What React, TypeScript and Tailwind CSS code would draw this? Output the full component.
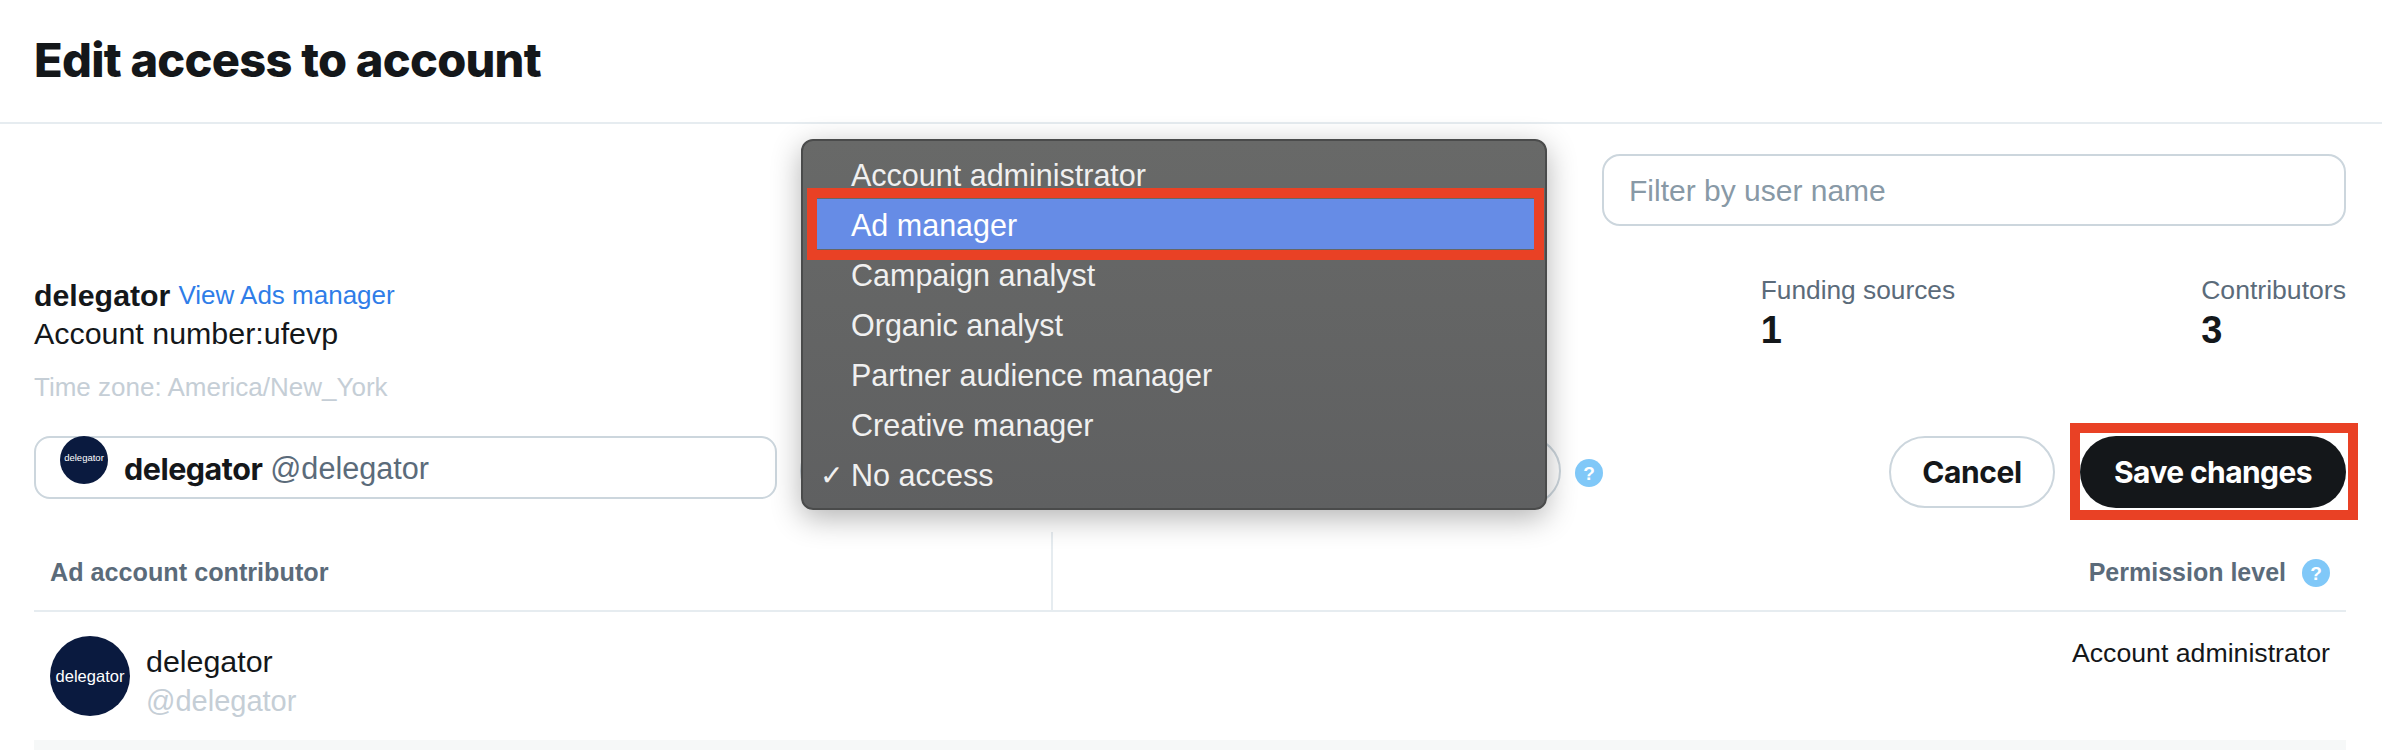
const ROLES = [
  "Account administrator",
  "Ad manager",
  "Campaign analyst",
  "Organic analyst",
  "Partner audience manager",
  "Creative manager",
  "No access",
];

function HelpDot() {
  return (
    <span className="flex h-[28px] w-[28px] shrink-0 items-center justify-center rounded-full bg-[#80c8f8] text-[19px] font-bold leading-none text-white">
      ?
    </span>
  );
}

function Avatar({ size, text }: { size: string; text: string }) {
  return (
    <span className={`flex shrink-0 items-center justify-center overflow-hidden rounded-full bg-[#0a1a3f] text-white ${size} ${text}`}>
      delegator
    </span>
  );
}

function RoleMenu() {
  return (
    <div className="absolute left-[801px] top-[139px] z-10 h-[371px] w-[746px] rounded-[12px] border-2 border-[#4a4b4b] bg-gradient-to-b from-[#686968] to-[#5f6061] pt-[8px] shadow-[0_8px_30px_rgba(0,0,0,0.3)]">
      {ROLES.map((role) => (
        <div
          key={role}
          className={`relative ml-[14px] mr-[11px] flex h-[50px] items-center pt-[3px] text-[30.5px] ${
            role === "Ad manager" ? "bg-[#668ce6] text-white" : "text-[#f0f0f0]"
          }`}
        >
          <span className="w-[34px] pl-[3px] text-[28px]">{role === "No access" ? "✓" : ""}</span>
          {role}
          {role === "Ad manager" && (
            <span className="absolute -inset-x-[10px] -inset-y-[11px] border-[10px] border-[#e94125]" />
          )}
        </div>
      ))}
    </div>
  );
}

export default function App() {
  return (
    <div className="relative h-[750px] w-[2382px] overflow-hidden bg-white font-['Liberation_Sans',sans-serif] text-[#14171a]">
      <header className="flex h-[124px] items-center border-b-2 border-[#e6ecf0] pb-[1px] pl-[34px]">
        <h1 className="font-['Inter',sans-serif] text-[47px] font-extrabold tracking-[-0.75px]">Edit access to account</h1>
      </header>

      <main className="pl-[34px] pr-[36px]">
        <div className="flex justify-end pt-[30px]">
          <div className="flex h-[72px] w-[744px] items-center rounded-[18px] border-2 border-[#ccd6dd] pl-[25px] text-[30px] text-[#8899a6]">
            Filter by user name
          </div>
        </div>

        <div className="flex h-[210px] justify-between pt-[50px]">
          <div>
            <p className="flex h-[38px] items-center pt-[1px] text-[30.3px]">
              <b className="font-bold">delegator</b>
              <span className="ml-[8px] text-[26px] text-[#2f7de8]">View Ads manager</span>
            </p>
            <p className="flex h-[40px] items-center text-[30.4px]">Account number:ufevp</p>
            <p className="mt-[14px] flex h-[38px] items-center text-[26px] text-[#c5ced6]">Time zone: America/New_York</p>
          </div>
          <div className="flex gap-[246px] -mt-[2px]">
            <div>
              <p className="flex h-[34px] items-center text-[26.3px] text-[#5b6b7a]">Funding sources</p>
              <p className="flex h-[44px] items-center text-[38px] font-bold">1</p>
            </div>
            <div>
              <p className="flex h-[34px] items-center text-[26.6px] text-[#5b6b7a]">Contributors</p>
              <p className="flex h-[44px] items-center text-[38px] font-bold">3</p>
            </div>
          </div>
        </div>

        <div className="flex items-start">
          <div className="flex h-[63px] w-[743px] items-start rounded-[16px] border-2 border-[#ccd6dd] pl-[24px]">
            <Avatar size="h-[48px] w-[48px] -mt-[2px] pb-[4px]" text="text-[9.5px]" />
            <span className="ml-[16px] flex h-[62px] items-center text-[30.6px]">
              <b className="font-['Inter',sans-serif] text-[30.5px] font-bold tracking-[-0.5px]">delegator</b>
              <span className="ml-[8px] text-[#5b6b7a]">@delegator</span>
            </span>
          </div>
          <div className="ml-[23px] h-[70px] w-[761px] rounded-full border-2 border-[#ccd6dd]" />
          <span className="ml-[14px] mt-[23px]"><HelpDot /></span>
          <div className="ml-auto flex items-start gap-[25px]">
            <button className="h-[72px] w-[166px] rounded-full border-2 border-[#ccd6dd] font-['Inter',sans-serif] text-[30px] font-bold tracking-[-0.4px]">
              Cancel
            </button>
            <div className="relative">
              <button className="h-[72px] w-[266px] rounded-full bg-[#14171a] font-['Inter',sans-serif] text-[30px] font-bold tracking-[-0.6px] text-white">
                Save changes
              </button>
              <span className="absolute -bottom-[12px] -left-[10px] -right-[12px] -top-[13px] border-[10px] border-[#e94125]" />
            </div>
          </div>
        </div>

        <div className="mt-[24px] flex h-[80px] border-b-2 border-[#e6ecf0]">
          <div className="flex w-[1019px] items-center border-r-2 border-[#e6ecf0] pl-[16px] pt-[4px] text-[25.2px] font-bold text-[#5b6b7a]">
            Ad account contributor
          </div>
          <div className="flex flex-1 items-center justify-end gap-[16px] pr-[16px] pt-[4px] text-[25px] font-bold text-[#5b6b7a]">
            Permission level
            <HelpDot />
          </div>
        </div>

        <div className="flex h-[128px] items-start justify-between pl-[16px] pr-[16px] pt-[24px]">
          <div className="flex gap-[16px]">
            <Avatar size="h-[80px] w-[80px]" text="text-[16.5px]" />
            <div>
              <p className="flex h-[51px] items-center text-[30.4px]">delegator</p>
              <p className="flex h-[29px] items-center text-[29px] text-[#c5ced6]">@delegator</p>
            </div>
          </div>
          <p className="flex h-[34px] items-center text-[26.7px]">Account administrator</p>
        </div>

        <div className="h-[10px] bg-[#f6f8f8]" />
      </main>

      <RoleMenu />
    </div>
  );
}
